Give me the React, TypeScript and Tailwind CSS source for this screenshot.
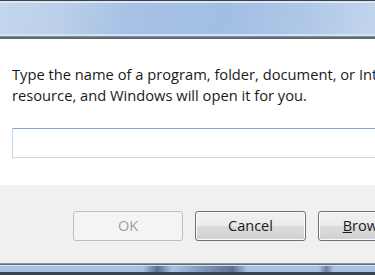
export default function App() {
  return (
    <div
      className="w-[375px] h-[275px] overflow-hidden bg-white flex flex-col"
      style={{ fontFamily: '"Open Sans", "Noto Sans", sans-serif' }}
    >
      {/* top frame */}
      <div className="h-[39px] flex flex-col shrink-0">
        <div className="h-[1px] bg-[#3b4350]" />
        <div className="h-[2px] bg-[#dce7f4]" />
        <div className="flex-1 bg-[linear-gradient(100deg,#c3d6ed_0%,#bcd0ea_15%,#a6c1e4_35%,#a2bee3_60%,#aec7e7_80%,#c2d5ec_100%)]" />
        <div className="h-[2px] bg-[#d3e1f1]" />
        <div className="h-[1px] bg-[#8593a4]" />
        <div className="h-[2px] bg-[#5e6978]" />
      </div>

      {/* body */}
      <div className="h-[146px] shrink-0 bg-white pl-[12px] pt-[25px]">
        <p className="text-[14.7px] leading-[21px] text-[#1a1a1a] whitespace-nowrap">
          Type the name of a program, folder, document, or Internet
          <br />
          resource, and Windows will open it for you.
        </p>
        <div className="mt-[22px] h-[30px] w-[400px] border border-[#c3d8ee] border-t-[#87a6cc] bg-white" />
      </div>

      {/* footer */}
      <div className="h-[78px] shrink-0 bg-[#f0f0f0] flex gap-[12px] pl-[73px] pt-[26px]">
        <div className="w-[110px] h-[30px] shrink-0 rounded-[3px] border border-[#bfbfbf] bg-[#f4f4f4] flex items-center justify-center text-[14.5px] text-[#9e9e9e]">
          OK
        </div>
        <div className="w-[111px] h-[30px] shrink-0 rounded-[3px] border border-[#707070] bg-[linear-gradient(#f2f2f2_0%,#ebebeb_50%,#dddddd_50%,#cfcfcf_100%)] shadow-[inset_0_0_0_1px_#fcfcfc] flex items-center justify-center text-[14.5px] text-[#1a1a1a]">
          Cancel
        </div>
        <div className="w-[111px] h-[30px] shrink-0 rounded-[3px] border border-[#707070] bg-[linear-gradient(#f2f2f2_0%,#ebebeb_50%,#dddddd_50%,#cfcfcf_100%)] shadow-[inset_0_0_0_1px_#fcfcfc] flex items-center justify-center text-[14.5px] text-[#1a1a1a]">
          <span>
            <span className="underline">B</span>rowse...
          </span>
        </div>
      </div>

      {/* bottom frame */}
      <div className="flex-1 flex flex-col">
        <div className="h-[1px] bg-[#8c96a3]" />
        <div className="h-[1px] bg-[#5f6b7a]" />
        <div className="h-[1px] bg-[#dbe5f1]" />
        <div className="flex-1 bg-[linear-gradient(90deg,#a9c3e6_0%,#a9c3e6_38%,#5c7090_42%,#a9c3e6_46%,#8aa2c8_52%,#5d7193_62%,#a9c3e6_66%,#a9c3e6_85%,#6d7f9c_87%,#a9c3e6_89%,#a9c3e6_100%)]" />
        <div className="h-[3px] bg-[#3a4350]" />
      </div>
    </div>
  );
}
